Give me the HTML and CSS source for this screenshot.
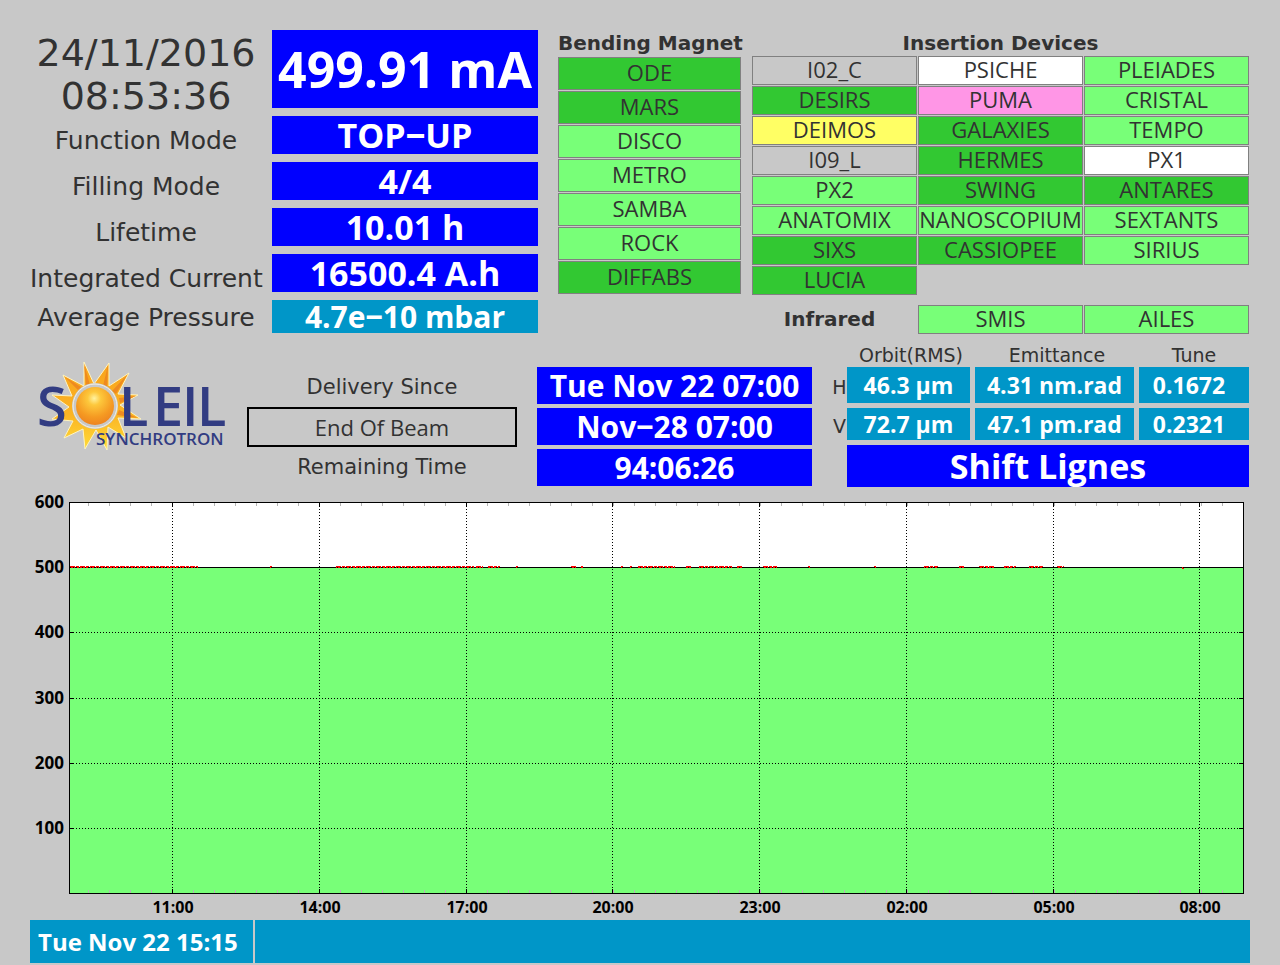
FILE: index.html
```html
<!DOCTYPE html>
<html lang="en">
<head>
<meta charset="UTF-8">
<meta name="viewport" content="width=device-width, initial-scale=1.0">
<title>SOLEIL Machine Status</title>
<link rel="stylesheet" href="styles.css">
</head>
<body>
<main class="screen">

  <section class="top">
    <div class="status">
      <div class="labels">
        <div class="clock">24/11/2016<br>08:53:36</div>
        <div class="label">Function Mode</div>
        <div class="label">Filling Mode</div>
        <div class="label">Lifetime</div>
        <div class="label">Integrated Current</div>
        <div class="label last">Average Pressure</div>
      </div>
      <div class="values">
        <div class="value current">499.91 mA</div>
        <div class="value">TOP‒UP</div>
        <div class="value">4/4</div>
        <div class="value">10.01 h</div>
        <div class="value">16500.4 A.h</div>
        <div class="value pressure">4.7e‒10 mbar</div>
      </div>
    </div>

    <div class="bending">
      <h2>Bending Magnet</h2>
      <ul class="lines tall">
        <li class="open">ODE</li>
        <li class="open">MARS</li>
        <li class="beam">DISCO</li>
        <li class="beam">METRO</li>
        <li class="beam">SAMBA</li>
        <li class="beam">ROCK</li>
        <li class="open">DIFFABS</li>
      </ul>
    </div>

    <div class="insertion">
      <h2>Insertion Devices</h2>
      <ul class="lines three">
        <li>I02_C</li>
        <li class="white">PSICHE</li>
        <li class="beam">PLEIADES</li>
        <li class="open">DESIRS</li>
        <li class="pink">PUMA</li>
        <li class="beam">CRISTAL</li>
        <li class="yellow">DEIMOS</li>
        <li class="open">GALAXIES</li>
        <li class="beam">TEMPO</li>
        <li>I09_L</li>
        <li class="open">HERMES</li>
        <li class="white">PX1</li>
        <li class="beam">PX2</li>
        <li class="open">SWING</li>
        <li class="open">ANTARES</li>
        <li class="beam">ANATOMIX</li>
        <li class="beam">NANOSCOPIUM</li>
        <li class="beam">SEXTANTS</li>
        <li class="open">SIXS</li>
        <li class="open">CASSIOPEE</li>
        <li class="beam">SIRIUS</li>
        <li class="open">LUCIA</li>
      </ul>
      <div class="infrared">
        <h2>Infrared</h2>
        <ul class="lines two">
          <li class="beam">SMIS</li>
          <li class="beam">AILES</li>
        </ul>
      </div>
    </div>
  </section>

  <section class="middle">
    <svg class="logo" viewBox="0 0 197 92" role="img" aria-label="SOLEIL Synchrotron">
      <defs>
        <radialGradient id="sun" cx="48%" cy="30%" r="70%">
          <stop offset="0" stop-color="#fff2a0"/>
          <stop offset="0.25" stop-color="#fdc83c"/>
          <stop offset="0.7" stop-color="#f59a22"/>
          <stop offset="1" stop-color="#ee8420"/>
        </radialGradient>
        <linearGradient id="rays" x1="0" y1="0" x2="0" y2="1">
          <stop offset="0" stop-color="#f8a21c"/>
          <stop offset="0.6" stop-color="#fbb424"/>
          <stop offset="1" stop-color="#ffdc38"/>
        </linearGradient>
      </defs>
      <path d="M54 1L64 23L79 2L79 25L99 12L88 33L108 34L90 44L111 58L88 57L96 77L78 66L77 89L66 69L55 88L53 68L34 77L43 60L22 58L39 46L22 34L42 35L33 14L54 25Z" fill="url(#rays)" stroke="#fff4c0"/>
      <path d="M54 3L60 24L56 24ZM78 4L73 25L77 27ZM97 14L82 30L86 33ZM106 35L89 37L90 42ZM108 57L89 49L87 54ZM35 16L48 29L51 26Z" fill="#ee8a20"/>
      <circle cx="65" cy="45" r="23" fill="#c8c8c8"/>
      <circle cx="65" cy="45" r="22" fill="none" stroke="#f4f0e4"/>
      <circle cx="65" cy="45" r="19" fill="url(#sun)"/>
      <text class="name" x="7 89 123 152 167" y="65">SLEIL</text>
      <text class="sub" x="66" y="84">SYNCHROTRON</text>
    </svg>

    <div class="delivery">
      <div class="delivery-label">Delivery Since</div>
      <button class="end-beam" type="button">End Of Beam</button>
      <div class="delivery-label">Remaining Time</div>
    </div>

    <div class="times">
      <div class="time">Tue Nov 22 07:00</div>
      <div class="time">Nov‒28 07:00</div>
      <div class="time">94:06:26</div>
    </div>

    <div class="beam-info">
      <table>
        <thead>
          <tr>
            <td class="axis"></td>
            <th class="orbit" scope="col">Orbit(RMS)</th>
            <th class="emittance" scope="col">Emittance</th>
            <th class="tune" scope="col">Tune</th>
          </tr>
        </thead>
        <tbody>
          <tr class="h">
            <th class="axis" scope="row">H</th>
            <td>46.3 µm</td>
            <td>4.31 nm.rad</td>
            <td class="tune">0.1672</td>
          </tr>
          <tr class="v">
            <th class="axis" scope="row">V</th>
            <td>72.7 µm</td>
            <td>47.1 pm.rad</td>
            <td class="tune">0.2321</td>
          </tr>
        </tbody>
      </table>
      <div class="shift">Shift Lignes</div>
    </div>
  </section>

  <svg class="chart" viewBox="0 0 1220 420" role="img" aria-label="Beam current over the last 24 hours">
    <rect x="39" y="5" width="1175" height="391" fill="#fff"/>
    <rect x="39" y="70" width="1175" height="326" fill="#78ff78"/>

    <!-- minor ticks -->
    <path class="minor" d="M58 7H1213M58 394H1213"/>

    <!-- grid -->
    <path class="grid" d="M142 6V396M289 6V396M436 6V396M582 6V396M729 6V396M876 6V396M1023 6V396M1169 6V396"/>
    <path class="grid" d="M40 135H1213M40 201H1213M40 266H1213M40 331H1213"/>

    <!-- beam current -->
    <path class="line" d="M40 70H1213"/>
    <path class="red" d="M40 70H168M240 70H242M306 70H444M446 70H453M458 70H470M486 70H488M541 70H546M551 70H553M591 70H593M600 70H602M608 70H645M656 70H662M669 70H702M707 70H713M733 70H747M778 70H780M844 70H846M894 70H908M929 70H934M949 70H964M974 70H986M999 70H1013M1027 70H1034M1152 71H1154"/>
    <path class="grid" d="M40 70H1213"/>

    <!-- frame and major ticks -->
    <path class="line" d="M39 5H1214M39 396H1214M39 5V396M1213 5V396"/>
    <path class="line" d="M142 5V10M289 5V10M436 5V10M582 5V10M729 5V10M876 5V10M1023 5V10M1169 5V10"/>
    <path class="line" d="M142 392V396M289 392V396M436 392V396M582 392V396M729 392V396M876 392V396M1023 392V396M1169 392V396"/>
    <path class="line" d="M39 135H44M39 201H44M39 266H44M39 331H44M1209 135H1214M1209 201H1214M1209 266H1214M1209 331H1214"/>

    <g class="y-axis">
      <text x="34" y="11">600</text>
      <text x="34" y="76">500</text>
      <text x="34" y="141">400</text>
      <text x="34" y="207">300</text>
      <text x="34" y="272">200</text>
      <text x="34" y="337">100</text>
    </g>
    <g class="x-axis">
      <text x="143" y="416">11:00</text>
      <text x="290" y="416">14:00</text>
      <text x="437" y="416">17:00</text>
      <text x="583" y="416">20:00</text>
      <text x="730" y="416">23:00</text>
      <text x="877" y="416">02:00</text>
      <text x="1024" y="416">05:00</text>
      <text x="1170" y="416">08:00</text>
    </g>
  </svg>

  <footer class="message">
    <div class="message-date">Tue Nov 22 15:15</div>
    <div class="message-text"></div>
  </footer>

</main>
</body>
</html>
```
FILE: styles.css
```css
* {
  box-sizing: border-box;
}
body {
  margin: 0;
  background-color: #c8c8c8;
  color: #323232;
  font-family: "Open Sans", "Noto Sans", sans-serif;
}
.screen {
  padding: 30px 30px 2px;
}
h2 {
  margin: 0;
  font-family: "DejaVu Sans", sans-serif;
  font-size: 20px;
  line-height: 26px;
  text-align: center;
  white-space: nowrap;
}

/* top part */
.top {
  display: grid;
  grid-template-columns: minmax(0, 517fr) minmax(0, 183fr) minmax(0, 497fr);
  column-gap: 11px;
  padding-right: 1px;
}
.status {
  display: grid;
  grid-template-columns: minmax(0, 232fr) minmax(0, 266fr);
  column-gap: 10px;
  margin-right: 9px;
}
.labels {
  padding-top: 2px;
  font-family: "DejaVu Sans", sans-serif;
  text-align: center;
  white-space: nowrap;
}
.clock {
  font-size: 38px;
  line-height: 43px;
}
.label {
  font-size: 25px;
  line-height: 46px;
}
.label.last {
  line-height: 32px;
}
.values {
  display: flex;
  flex-direction: column;
  gap: 8px;
}
.value {
  background-color: #0000ff;
  color: #fff;
  font-size: 34px;
  font-weight: bold;
  line-height: 38px;
  text-align: center;
  white-space: nowrap;
}
.value.current {
  font-size: 50px;
  line-height: 78px;
}
.value.pressure {
  background-color: #0096c8;
  font-size: 30px;
  line-height: 33px;
}

/* beamlines */
.lines {
  display: grid;
  gap: 1px;
  margin: 0;
  padding: 0;
  list-style: none;
}
.lines.three {
  grid-template-columns: repeat(3, 1fr);
}
.lines.two {
  grid-template-columns: repeat(2, 1fr);
}
.lines li {
  padding-bottom: 2px;
  border: 1px solid #808080;
  font-size: 22px;
  line-height: 25px;
  text-align: center;
  white-space: nowrap;
}
.lines.tall {
  margin-top: 1px;
}
.lines.tall li {
  line-height: 29px;
}
.lines .open { background-color: #32c832; }
.lines .beam { background-color: #78ff78; }
.lines .white { background-color: #fff; }
.lines .pink { background-color: #ff96e6; }
.lines .yellow { background-color: #ffff64; }
.infrared {
  display: grid;
  grid-template-columns: 165fr 331fr;
  column-gap: 1px;
  margin-top: 10px;
}
.infrared h2 {
  padding-right: 10px;
  line-height: 28px;
}

/* middle part */
.middle {
  display: grid;
  grid-template-columns: 197fr 270fr 275fr 417fr;
  column-gap: 20px;
  padding: 10px 1px 0 0;
}
.logo {
  width: 100%;
  margin-top: 17px;
}
.logo text {
  fill: #323c82;
}
.logo .name {
  font-size: 54px;
  font-weight: 600;
}
.logo .sub {
  font-size: 17px;
  font-weight: 600;
}
.delivery,
.times {
  display: flex;
  flex-direction: column;
  padding-top: 23px;
}
.times {
  gap: 4px;
}
.delivery-label {
  font-family: "DejaVu Sans", sans-serif;
  font-size: 21px;
  line-height: 40px;
  text-align: center;
}
.end-beam {
  height: 40px;
  padding: 0;
  border: 2px solid #000;
  background: none;
  color: #323232;
  font-family: "Open Sans", sans-serif;
  font-size: 22px;
}
.time {
  background-color: #0000ff;
  color: #fff;
  font-size: 30px;
  font-weight: bold;
  line-height: 37px;
  text-align: center;
  white-space: nowrap;
}
.beam-info table {
  width: 100%;
  border-spacing: 0;
  table-layout: fixed;
}
.beam-info th,
.beam-info td {
  padding: 0;
  text-align: center;
  white-space: nowrap;
}
.beam-info th {
  font-family: "DejaVu Sans", sans-serif;
  font-size: 19px;
  font-weight: normal;
  line-height: 23px;
}
.beam-info tbody td {
  border-right: 5px solid transparent;
  border-bottom: 5px solid transparent;
  background-color: #0096c8;
  background-clip: padding-box;
  color: #fff;
  font-size: 23px;
  font-weight: bold;
}
.beam-info tbody td.tune {
  padding-right: 10px;
  border-right: 0;
}
.beam-info .axis { width: 15px; }
.beam-info .orbit { width: 128px; }
.beam-info .emittance { width: 164px; }
.beam-info .h td { line-height: 36px; }
.beam-info .v td { line-height: 32px; }
.shift {
  margin-left: 15px;
  background-color: #0000ff;
  color: #fff;
  font-size: 34px;
  font-weight: bold;
  line-height: 42px;
  text-align: center;
}

/* chart */
.chart {
  display: block;
  width: 100%;
  margin-top: 10px;
  overflow: visible;
}
.chart path {
  fill: none;
  stroke-width: 1px;
  shape-rendering: crispEdges;
}
.chart .line { stroke: #000; }
.chart .grid {
  stroke: #000;
  stroke-dasharray: 1 2;
}
.chart .minor {
  stroke: #b4b4b4;
  stroke-width: 3px;
  stroke-dasharray: 1 20;
}
.chart .red {
  stroke: #ff0000;
  stroke-width: 2px;
  stroke-dasharray: 5 1 3 1;
}
.chart text {
  font-size: 16px;
  font-weight: bold;
}
.chart .y-axis text { font-size: 17px; }
.y-axis { text-anchor: end; }
.x-axis { text-anchor: middle; }

/* message bar */
.message {
  display: grid;
  grid-template-columns: 223fr 995fr;
  gap: 2px;
  margin-top: 3px;
}
.message div {
  background-color: #0096c8;
  color: #fff;
  font-size: 24px;
  font-weight: bold;
  line-height: 43px;
}
.message-date {
  padding-left: 8px;
  white-space: nowrap;
}
```
